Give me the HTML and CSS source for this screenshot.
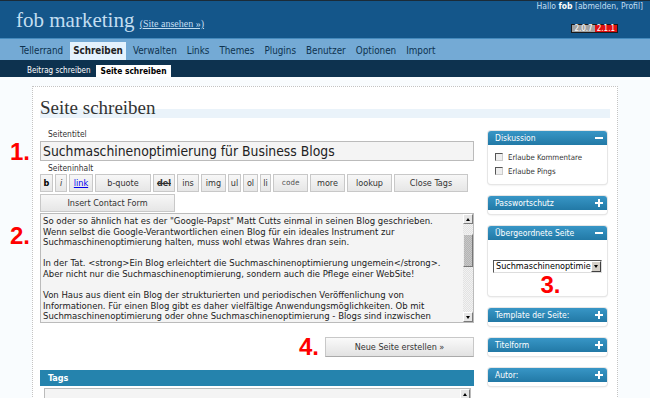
FILE: index.html
```html
<!DOCTYPE html>
<html lang="de">
<head>
<meta charset="utf-8">
<title>Seite schreiben ‹ fob marketing</title>
<link rel="stylesheet" href="styles.css">
</head>
<body>
<header class="wphead">
  <h1 class="blog-title">fob marketing <a class="view-site" href="#">(Site ansehen »)</a></h1>
  <div class="head-right">
    <div class="user-info">Hallo <b>fob</b> [abmelden, Profil]</div>
    <div class="versions"><span class="ver ver-old">2.0.7</span><span class="ver ver-new">2.1.1</span></div>
  </div>
</header>
<nav class="adminmenu">
  <a>Tellerrand</a><a class="current">Schreiben</a><a>Verwalten</a><a>Links</a><a>Themes</a><a>Plugins</a><a>Benutzer</a><a>Optionen</a><a>Import</a>
</nav>
<nav class="submenu">
  <a>Beitrag schreiben</a><a class="current">Seite schreiben</a>
</nav>
<div class="wrap">
  <h2>Seite schreiben</h2>
  <div class="columns">
    <div class="main">
      <div class="label">Seitentitel</div>
      <div class="field">
        <span class="mark mark-1">1.</span>
        <div class="title-input">Suchmaschinenoptimierung für Business Blogs</div>
      </div>
      <div class="label label-content">Seiteninhalt</div>
      <div class="toolbar">
        <span class="qt qt-b">b</span>
        <span class="qt qt-i">i</span>
        <span class="qt qt-link">link</span>
        <span class="qt qt-bquote">b-quote</span>
        <span class="qt qt-del">del</span>
        <span class="qt qt-ins">ins</span>
        <span class="qt qt-img">img</span>
        <span class="qt qt-ul">ul</span>
        <span class="qt qt-ol">ol</span>
        <span class="qt qt-li">li</span>
        <span class="qt qt-code">code</span>
        <span class="qt qt-more">more</span>
        <span class="qt qt-lookup">lookup</span>
        <span class="qt qt-close">Close Tags</span>
        <span class="qt qt-contact">Insert Contact Form</span>
      </div>
      <div class="editor">
        <span class="mark mark-2">2.</span>
        <div class="editor-text">
          <div class="ln">So oder so ähnlich hat es der "Google-Papst" Matt Cutts einmal in seinen Blog geschrieben.</div>
          <div class="ln">Wenn selbst die Google-Verantwortlichen einen Blog für ein ideales Instrument zur</div>
          <div class="ln">Suchmaschinenoptimierung halten, muss wohl etwas Wahres dran sein.</div>
          <div class="ln">&nbsp;</div>
          <div class="ln">In der Tat. &lt;strong&gt;Ein Blog erleichtert die Suchmaschinenoptimierung ungemein&lt;/strong&gt;.</div>
          <div class="ln">Aber nicht nur die Suchmaschinenoptimierung, sondern auch die Pflege einer WebSite!</div>
          <div class="ln">&nbsp;</div>
          <div class="ln">Von Haus aus dient ein Blog der strukturierten und periodischen Veröffenlichung von</div>
          <div class="ln">Informationen. Für einen Blog gibt es daher vielfältige Anwendungsmöglichkeiten. Ob mit</div>
          <div class="ln">Suchmaschinenoptimierung oder ohne Suchmaschinenoptimierung - Blogs sind inzwischen</div>
          <div class="ln">oft fester Bestandteil einer modernen Unternehmenskommunikation und sehr beliebt.</div>
        </div>
        <div class="vscroll">
          <span class="sb-btn sb-up"></span>
          <span class="sb-track"><span class="sb-thumb"></span></span>
          <span class="sb-btn sb-down"></span>
        </div>
      </div>
      <div class="submit-row">
        <span class="mark-inline">4.</span>
        <span class="btn">Neue Seite erstellen »</span>
      </div>
      <div class="tags">
        <div class="tags-head">Tags</div>
        <div class="tags-body">
          <div class="tags-input">
            <div class="tags-text"></div>
            <div class="vscroll">
              <span class="sb-btn sb-up"></span>
              <span class="sb-track"></span>
            </div>
          </div>
        </div>
      </div>
    </div>
    <aside class="sidebar">
      <div class="sbox">
        <div class="sbox-head"><span>Diskussion</span><svg class="tog" width="8" height="8" viewBox="0 0 8 8"><rect x="0" y="3" width="8" height="2" fill="#fff"/></svg></div>
        <div class="sbox-body disc">
          <label class="chk"><span class="cb"></span>Erlaube Kommentare</label>
          <label class="chk"><span class="cb"></span>Erlaube Pings</label>
        </div>
      </div>
      <div class="sbox">
        <div class="sbox-head"><span>Passwortschutz</span><svg class="tog" width="8" height="8" viewBox="0 0 8 8"><rect x="0" y="3" width="8" height="2" fill="#fff"/><rect x="3" y="0" width="2" height="8" fill="#fff"/></svg></div>
        <div class="sbox-body closed"></div>
      </div>
      <div class="sbox">
        <div class="sbox-head"><span>Übergeordnete Seite</span><svg class="tog" width="8" height="8" viewBox="0 0 8 8"><rect x="0" y="3" width="8" height="2" fill="#fff"/></svg></div>
        <div class="sbox-body parent">
          <div class="select"><span class="select-text">Suchmaschinenoptimie</span><span class="select-arrow"></span></div>
          <span class="mark-3">3.</span>
        </div>
      </div>
      <div class="sbox">
        <div class="sbox-head"><span>Template der Seite:</span><svg class="tog" width="8" height="8" viewBox="0 0 8 8"><rect x="0" y="3" width="8" height="2" fill="#fff"/><rect x="3" y="0" width="2" height="8" fill="#fff"/></svg></div>
        <div class="sbox-body closed"></div>
      </div>
      <div class="sbox">
        <div class="sbox-head"><span>Titelform</span><svg class="tog" width="8" height="8" viewBox="0 0 8 8"><rect x="0" y="3" width="8" height="2" fill="#fff"/><rect x="3" y="0" width="2" height="8" fill="#fff"/></svg></div>
        <div class="sbox-body closed"></div>
      </div>
      <div class="sbox">
        <div class="sbox-head"><span>Autor:</span><svg class="tog" width="8" height="8" viewBox="0 0 8 8"><rect x="0" y="3" width="8" height="2" fill="#fff"/><rect x="3" y="0" width="2" height="8" fill="#fff"/></svg></div>
        <div class="sbox-body closed"></div>
      </div>
    </aside>
  </div>
</div>
</body>
</html>
```

FILE: styles.css
```css
* { box-sizing: border-box; }

html, body {
  margin: 0;
  padding: 0;
  overflow: hidden;
}

body {
  width: 650px;
  height: 398px;
  background: #f9fcfe;
  font-family: "DejaVu Sans Condensed", "DejaVu Sans", sans-serif;
  font-stretch: condensed;
  font-size: 9px;
  color: #333;
}

a { text-decoration: none; }

/* ---------- header ---------- */
.wphead {
  display: flex;
  justify-content: space-between;
  align-items: flex-start;
  height: 38px;
  background: #14568a;
  border-top: 1px solid #1b2b38;
  padding: 0 7px 0 16px;
}

.blog-title {
  margin: 0;
  padding-top: 7px;
  font: normal 21px/24px "Liberation Serif", serif;
  color: #c3def1;
}

.view-site {
  font-size: 10px;
  color: #c3def1;
  text-decoration: underline;
}

.head-right {
  display: flex;
  flex-direction: column;
  align-items: flex-end;
}

.user-info {
  font-size: 8.5px;
  line-height: 11px;
  color: #c3def1;
}

.user-info b { color: #fff; }

.versions {
  display: flex;
  margin: 12px 25px 0 0;
  border: 1px solid #1a1a1a;
}

.ver {
  font-size: 8px;
  line-height: 7px;
  padding: 0 2px;
  color: #fff;
}

.ver-old { background: #a2a2a2; }
.ver-new { background: #e01010; }

/* ---------- menus ---------- */
.adminmenu {
  display: flex;
  height: 22px;
  background: #74aad5;
  border-top: 1px solid #448abd;
  padding: 3px 0 0 15px;
}

.adminmenu a {
  height: 18px;
  line-height: 18px;
  padding: 0 3px;
  margin: 0 2px;
  font-size: 9.8px;
  color: #0d324f;
}

.adminmenu a.current {
  background: #e4f2fd;
  color: #222;
  font-weight: bold;
}

.submenu {
  display: flex;
  height: 17px;
  background: #0d324f;
  padding: 5px 0 0 23px;
}

.submenu a {
  height: 12px;
  line-height: 12px;
  padding: 0 4px;
  margin-right: 2px;
  font-size: 8px;
  color: #fff;
}

.submenu a.current {
  background: #fff;
  color: #000;
  font-weight: bold;
  font-size: 8.4px;
}

/* ---------- content panel ---------- */
.wrap {
  margin: 9px 32px 0;
  background: #fff;
  border: 1px dotted #c4c4c4;
  padding: 9px 7px 20px;
}

.wrap h2 {
  margin: 0;
  padding-top: 1px;
  font: normal 19px/21px "Liberation Serif", serif;
  color: #333;
  background: linear-gradient(to bottom, transparent 13px, #eaf3fa 13px);
}

.columns {
  display: flex;
  gap: 14px;
  margin: 11px 3px 0 0;
}

.main {
  flex: 1;
  min-width: 0;
}

.label {
  font-size: 8.4px;
  line-height: 11px;
  padding-left: 8px;
  color: #333;
}

.label-content { margin-top: 2px; }

.field { position: relative; margin-top: 1px; }

.title-input {
  height: 20px;
  border: 1px solid #bbb;
  background: #f4f4f4;
  font-size: 13.8px;
  line-height: 18px;
  padding-left: 2px;
  color: #222;
  white-space: nowrap;
  overflow: hidden;
}

.mark {
  position: absolute;
  font: bold 24px/24px "Liberation Sans", Arial, sans-serif;
  color: #f00;
}

.mark-1 { left: -30px; top: -1px; }
.mark-2 { left: -31px; top: 10px; }

.mark-inline {
  font: bold 24px/20px "Liberation Sans", Arial, sans-serif;
  color: #f00;
}

/* ---------- quicktags ---------- */
.toolbar {
  display: flex;
  flex-wrap: wrap;
  gap: 2px;
}

.qt {
  height: 18px;
  border: 1px solid #c8c8c8;
  background: linear-gradient(#f7f7f7, #e6e6e6);
  font-size: 9px;
  line-height: 16px;
  text-align: center;
  color: #333;
  white-space: nowrap;
}

.qt-b { width: 13px; font-weight: bold; color: #000; }
.qt-i { width: 12px; font-style: italic; }
.qt-link { width: 24px; color: #00e; text-decoration: underline; }
.qt-bquote { width: 56px; }
.qt-del { width: 22px; text-decoration: line-through; font-weight: bold; }
.qt-ins { width: 22px; }
.qt-img { width: 25px; }
.qt-ul { width: 13px; }
.qt-ol { width: 15px; }
.qt-li { width: 11px; }
.qt-code { width: 35px; font-family: "DejaVu Sans Mono", monospace; font-size: 7.5px; color: #555; }
.qt-more { width: 35px; }
.qt-lookup { width: 45px; }
.qt-close { width: 74px; }
.qt-contact { width: 135px; }

/* ---------- editor ---------- */
.editor {
  position: relative;
  display: flex;
  height: 110px;
  margin-top: 1px;
  border: 1px solid #bbb;
  background: #f4f4f4;
}

.editor-text {
  flex: 1;
  min-width: 0;
  overflow: hidden;
  padding: 2px 2px 0;
  font-family: "DejaVu Sans", sans-serif;
  font-stretch: normal;
  font-size: 8.5px;
  line-height: 10.6px;
  color: #1a1a1a;
}

.ln { white-space: nowrap; }

.vscroll {
  display: flex;
  flex-direction: column;
  width: 10px;
  background: repeating-conic-gradient(#f2f2f2 0 25%, #e2e2e2 0 50%) 0 0 / 2px 2px;
}

.sb-btn {
  display: flex;
  align-items: center;
  justify-content: center;
  height: 10px;
  background: #e6e6e6;
  border: 1px solid;
  border-color: #fff #7a7a7a #7a7a7a #fff;
}

.sb-up::before,
.sb-down::before,
.select-arrow::before {
  content: "";
  border-left: 2.5px solid transparent;
  border-right: 2.5px solid transparent;
}

.sb-up::before { border-bottom: 3px solid #000; }
.sb-down::before { border-top: 3px solid #000; }

.sb-track {
  flex: 1;
  padding-top: 10px;
}

.sb-thumb {
  display: block;
  height: 33px;
  background: repeating-conic-gradient(#c8c8c8 0 25%, #b4b4b4 0 50%) 0 0 / 2px 2px;
  border: 1px solid;
  border-color: #eee #777 #777 #eee;
}

/* ---------- submit ---------- */
.submit-row {
  display: flex;
  justify-content: flex-end;
  align-items: center;
  gap: 6px;
  margin-top: 14px;
}

.btn {
  width: 149px;
  height: 20px;
  border: 1px solid #c8c8c8;
  border-bottom-color: #aaa;
  background: linear-gradient(#fafafa, #e2e2e2);
  font-size: 9px;
  line-height: 18px;
  text-align: center;
  color: #333;
}

/* ---------- tags ---------- */
.tags { margin-top: 13px; }

.tags-head {
  height: 16px;
  line-height: 16px;
  padding-left: 8px;
  background: #2583ad;
  color: #fff;
  font-weight: bold;
  font-size: 9px;
}

.tags-body { padding: 2px 3px 0 4px; }

.tags-input {
  display: flex;
  height: 40px;
  border: 1px solid #bbb;
  background: #f4f4f4;
}

.tags-text { flex: 1; }

/* ---------- sidebar ---------- */
.sidebar {
  width: 119px;
  padding-top: 2px;
}

.sbox {
  margin-bottom: 12px;
  background: #fff;
  border-radius: 3px;
  box-shadow: 0 0 0 1px #e6e6e6, 0 1px 2px rgba(0, 0, 0, 0.15);
}

.sbox-head {
  display: flex;
  justify-content: space-between;
  align-items: center;
  height: 14px;
  padding: 0 4px 0 7px;
  border-radius: 3px 3px 0 0;
  background: linear-gradient(#3896c6, #2279a6);
  color: #fff;
  font-size: 8.5px;
  line-height: 14px;
  white-space: nowrap;
}

.tog { flex: none; }

.sbox-body.closed { height: 4px; }

.sbox-body.disc { padding: 5px 0 6px 7px; }

.chk {
  display: flex;
  align-items: center;
  gap: 5px;
  height: 14px;
  font-size: 7.8px;
  color: #333;
}

.cb {
  width: 8px;
  height: 8px;
  border: 1px solid;
  border-color: #555 #ccc #ccc #555;
  background: #eee;
}

.sbox-body.parent {
  padding: 20px 5px 2px;
}

.select {
  display: flex;
  height: 13px;
  border: 1px solid;
  border-color: #555 #ddd #ddd #555;
  background: #fff;
}

.select-text {
  flex: 1;
  min-width: 0;
  overflow: hidden;
  white-space: nowrap;
  padding-left: 2px;
  font-size: 9px;
  line-height: 11px;
  color: #000;
}

.select-arrow {
  display: flex;
  align-items: center;
  justify-content: center;
  width: 10px;
  background: #d4d0c8;
  border: 1px solid;
  border-color: #fff #404040 #404040 #fff;
}

.select-arrow::before { border-top: 3px solid #000; }

.mark-3 {
  display: block;
  margin-top: 3px;
  padding-left: 6px;
  text-align: center;
  font: bold 24px/18px "Liberation Sans", Arial, sans-serif;
  color: #f00;
}
```
